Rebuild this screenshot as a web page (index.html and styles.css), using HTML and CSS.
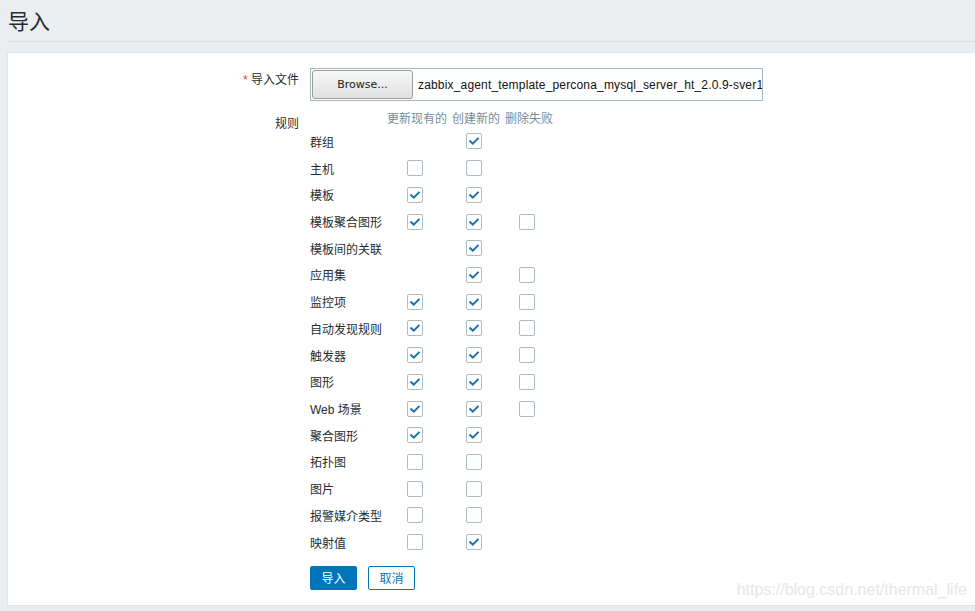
FILE: index.html
```html
<!DOCTYPE html>
<html lang="zh">
<head>
<meta charset="utf-8">
<title>导入</title>
<link rel="stylesheet" href="styles.css">
</head>
<body>
<header class="page-header">
  <h1 class="page-title">导入</h1>
</header>
<main class="container">
  <form class="form-list">
    <div class="form-row">
      <label class="form-label"><span class="required">*</span> 导入文件</label>
      <div class="form-field">
        <div class="file-box">
          <span class="browse-btn">Browse...</span>
          <span class="file-name">zabbix_agent_template_percona_mysql_server_ht_2.0.9-sver1</span>
        </div>
      </div>
    </div>
    <div class="form-row rules-row">
      <label class="form-label rules-label">规则</label>
      <div class="form-field">
        <div class="rules">
          <div class="rh"></div>
          <div class="rh">更新现有的</div>
          <div class="rh">创建新的</div>
          <div class="rh">删除失败</div>
        </div>
        <div class="rules" id="rules-body"></div>
      </div>
    </div>
    <div class="form-row buttons-row">
      <div></div>
      <div class="form-field buttons">
        <button type="button" class="btn btn-primary">导入</button>
        <button type="button" class="btn btn-alt">取消</button>
      </div>
    </div>
  </form>
  <div class="watermark">https://blog.csdn.net/thermal_life</div>
</main>
<script src="app.js"></script>
</body>
</html>
```
FILE: app.js
```js
(function () {
  // [label, update, create, delete] : 1 checked, 0 unchecked, null none
  var rows = [
    ['群组', null, 1, null],
    ['主机', 0, 0, null],
    ['模板', 1, 1, null],
    ['模板聚合图形', 1, 1, 0],
    ['模板间的关联', null, 1, null],
    ['应用集', null, 1, 0],
    ['监控项', 1, 1, 0],
    ['自动发现规则', 1, 1, 0],
    ['触发器', 1, 1, 0],
    ['图形', 1, 1, 0],
    ['Web 场景', 1, 1, 0],
    ['聚合图形', 1, 1, null],
    ['拓扑图', 0, 0, null],
    ['图片', 0, 0, null],
    ['报警媒介类型', 0, 0, null],
    ['映射值', 0, 1, null]
  ];
  var tick = '<svg viewBox="0 0 16 16" width="16" height="16"><path d="M4.2 8.2 L6.8 10.6 L11.8 5.6" fill="none" stroke="#1d6fb0" stroke-width="2" stroke-linecap="square"/></svg>';
  var body = document.getElementById('rules-body');
  var html = '';
  rows.forEach(function (r) {
    html += '<div class="rl">' + r[0] + '</div>';
    for (var i = 1; i < 4; i++) {
      if (r[i] === null) {
        html += '<div class="rc"></div>';
      } else {
        html += '<div class="rc"><span class="cb">' + (r[i] ? tick : '') + '</span></div>';
      }
    }
  });
  body.innerHTML = html;
})();
```
FILE: styles.css
```css
html, body {
  margin: 0;
  padding: 0;
}
body {
  background: #ebeef0;
  color: #1f2c33;
  font-family: Arial, "Liberation Sans", "Noto Sans CJK SC", sans-serif;
  font-size: 12px;
  overflow: hidden;
  height: 611px;
}
.page-header {
  margin-left: 7px;
  border-bottom: 1px solid #dadfe3;
  box-sizing: border-box;
  height: 42px;
}
.page-title {
  margin: 0;
  padding: 9px 0 0 1px;
  font-size: 21px;
  font-weight: normal;
  line-height: 26px;
  color: #1f2c33;
}
.container {
  position: relative;
  margin: 10px 0 0 7px;
  background: #ffffff;
  border: 1px solid #dfe4e7;
  border-right: none;
  height: 554px;
  box-sizing: border-box;
  padding-top: 15px;
}
.form-list {
  display: flex;
  flex-direction: column;
}
.form-row {
  display: grid;
  grid-template-columns: 291px 1fr;
  column-gap: 11px;
}
.form-label {
  text-align: right;
  padding-top: 5px;
  line-height: 14px;
}
.required {
  color: #e33734;
}
.file-box {
  width: 453px;
  height: 33px;
  box-sizing: border-box;
  border: 1px solid #a7b7c0;
  padding: 1px;
  display: flex;
  align-items: center;
  overflow: hidden;
  white-space: nowrap;
}
.browse-btn {
  flex: none;
  width: 101px;
  height: 29px;
  box-sizing: border-box;
  border: 1px solid #9c9c9c;
  border-radius: 3px;
  background: linear-gradient(#f8f8f8, #e1e1e1);
  font-family: "DejaVu Sans", sans-serif;
  font-size: 11px;
  display: flex;
  align-items: center;
  justify-content: center;
  color: #222;
}
.file-name {
  margin-left: 5px;
  font-size: 12px;
  letter-spacing: 0.17px;
  color: #111;
}
.rules-row {
  margin-top: 10px;
}
.rules-label {
  padding-top: 6px;
}
.rules {
  display: grid;
  grid-template-columns: 72px 60px 48px 48px;
  column-gap: 5px;
}
.rh {
  height: 17px;
  line-height: 17px;
  color: #768d99;
  white-space: nowrap;
}
.rl {
  height: 26.73px;
  display: flex;
  align-items: center;
  white-space: nowrap;
}
.rc {
  height: 26.73px;
  display: flex;
  align-items: center;
  justify-content: center;
  padding-right: 4px;
}
.cb {
  width: 16px;
  height: 16px;
  box-sizing: border-box;
  border: 1px solid #acbbc4;
  border-radius: 2px;
  background: #fff;
  position: relative;
}
.cb svg {
  position: absolute;
  left: -1px;
  top: -1px;
}
.buttons-row {
  margin-top: 10px;
}
.buttons {
  display: flex;
  gap: 11px;
}
.btn {
  height: 24px;
  width: 47px;
  padding: 0;
  border-radius: 2px;
  font-family: Arial, "Liberation Sans", "Noto Sans CJK SC", sans-serif;
  font-size: 12px;
  cursor: pointer;
}
.btn-primary {
  background: #0275b8;
  border: 1px solid #0275b8;
  color: #ffffff;
}
.btn-alt {
  background: #ffffff;
  border: 1px solid #0275b8;
  color: #0275b8;
}
.watermark {
  position: absolute;
  right: 8px;
  bottom: 6px;
  font-family: Arial, "Liberation Sans", sans-serif;
  font-size: 16px;
  color: #e6e6e6;
  white-space: nowrap;
}
```
